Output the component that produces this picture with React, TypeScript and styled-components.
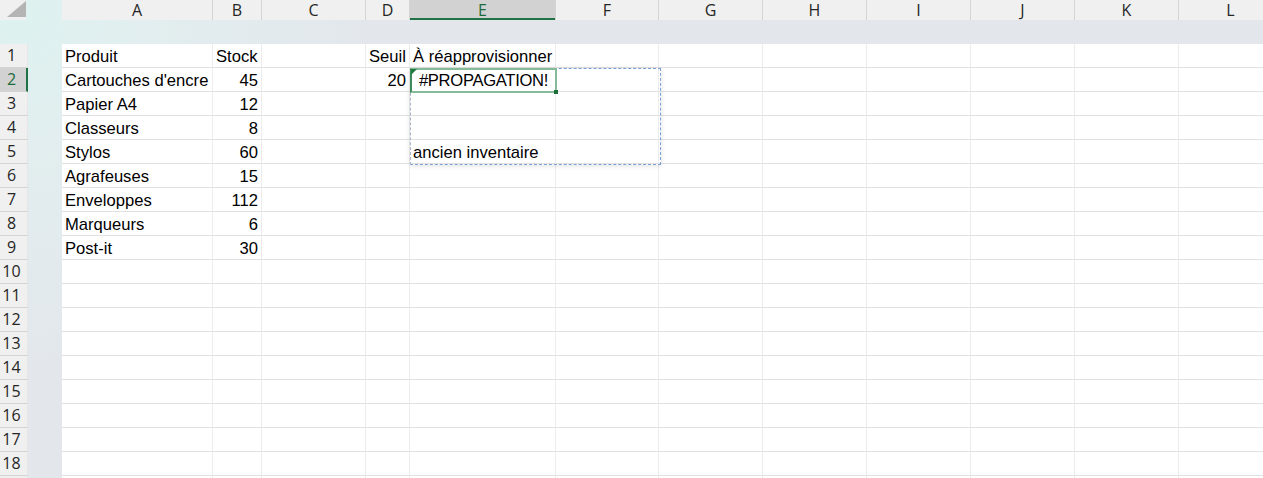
import React from "react";
import styled, { createGlobalStyle, css } from "styled-components";

const Global = createGlobalStyle`
  html, body { margin: 0; padding: 0; overflow: hidden; background: #ffffff; }
  * { box-sizing: border-box; }
`;

const COLS = [
  { key: "A", w: 151 },
  { key: "B", w: 49 },
  { key: "C", w: 104 },
  { key: "D", w: 44 },
  { key: "E", w: 146 },
  { key: "F", w: 103 },
  { key: "G", w: 104 },
  { key: "H", w: 104 },
  { key: "I", w: 104 },
  { key: "J", w: 104 },
  { key: "K", w: 104 },
  { key: "L", w: 104 },
];

const Sheet = styled.div`
  width: 1263px;
  height: 478px;
  overflow: hidden;
  display: grid;
  grid-template-columns: 28px 34px ${COLS.map((c) => c.w + "px").join(" ")};
  grid-template-rows: 20px 24px repeat(19, 24px);
  background: radial-gradient(circle at 20px 20px, #ddf2f0 0px, #e2eeef 120px, #e3e6eb 380px);
  font-family: "Liberation Sans", Arial, sans-serif;
`;

const Corner = styled.div`
  background: #f0f0f0;
  width: 26px;
  position: relative;
  svg { position: absolute; left: 0; top: 0; }
`;

const Spacer = styled.div``;

const Band = styled.div`
  grid-column: 1 / -1;
`;

const ColHeader = styled.div<{ $active?: boolean }>`
  background: ${(p) => (p.$active ? "#d2d2d2" : "#f0f0f0")};
  border-right: 1px solid #d4d4d4;
  box-shadow: ${(p) => (p.$active ? "inset 0 -2px 0 #217346" : "none")};
  color: ${(p) => (p.$active ? "#1e6b3a" : "#262626")};
  font-family: "Open Sans", "Noto Sans", sans-serif;
  font-size: 16px;
  line-height: 20px;
  height: 20px;
  text-align: center;
  white-space: nowrap;
`;

const RowHeader = styled.div<{ $active?: boolean }>`
  background: ${(p) => (p.$active ? "#d2d2d2" : "#f0f0f0")};
  border-bottom: 1px solid #d4d4d4;
  border-right: ${(p) => (p.$active ? "2px solid #217346" : "1px solid #e6e6e6")};
  color: ${(p) => (p.$active ? "#1e6b3a" : "#262626")};
  font-family: "Open Sans", "Noto Sans", sans-serif;
  font-size: 16px;
  line-height: 23px;
  text-align: center;
  padding-right: ${(p) => (p.$active ? "3px" : "4px")};
`;

type Align = "left" | "right" | "center";

const Cell = styled.div<{ $align?: Align }>`
  position: relative;
  background: #ffffff;
  border-right: 1px solid #ececec;
  border-bottom: 1px solid #e1e1e1;
  padding: 2px 3px 0 3px;
  font-size: 16.6px;
  line-height: 21px;
  color: #000000;
  white-space: nowrap;
  overflow: visible;
  text-align: ${(p) => p.$align || "left"};
  ${(p) =>
    p.$align === "center" &&
    css`
      padding-left: 2px;
      padding-right: 0;
      letter-spacing: -0.3px;
    `}
`;

const SpillBorder = styled.div`
  position: absolute;
  left: 0;
  top: 0;
  width: 251px;
  height: 97px;
  border: 1px dashed #7b9fd9;
  border-left-color: #a9b6c9;
  box-shadow: 0 1px 5px rgba(0, 0, 0, 0.12);
  pointer-events: none;
  z-index: 2;
`;

const ActiveBorder = styled.div`
  position: absolute;
  left: 0;
  top: 0;
  width: 147px;
  height: 25px;
  border: 2px solid #85bb98;
  border-left-color: #3f8a5a;
  pointer-events: none;
  z-index: 3;
`;

const FillHandle = styled.div`
  position: absolute;
  right: -3px;
  bottom: -3px;
  width: 4px;
  height: 4px;
  background: #1e6e3c;
`;

const ErrorFlag = styled.div`
  position: absolute;
  left: 1px;
  top: 1px;
  width: 0;
  height: 0;
  border-top: 6px solid #1f7a3f;
  border-right: 6px solid transparent;
  z-index: 4;
`;

type CellData = { v: string; align?: Align };

const data: Record<number, Record<string, CellData>> = {
  1: { A: { v: "Produit" }, B: { v: "Stock" }, D: { v: "Seuil" }, E: { v: "À réapprovisionner" } },
  2: { A: { v: "Cartouches d'encre" }, B: { v: "45", align: "right" }, D: { v: "20", align: "right" }, E: { v: "#PROPAGATION!", align: "center" } },
  3: { A: { v: "Papier A4" }, B: { v: "12", align: "right" } },
  4: { A: { v: "Classeurs" }, B: { v: "8", align: "right" } },
  5: { A: { v: "Stylos" }, B: { v: "60", align: "right" }, E: { v: "ancien inventaire" } },
  6: { A: { v: "Agrafeuses" }, B: { v: "15", align: "right" } },
  7: { A: { v: "Enveloppes" }, B: { v: "112", align: "right" } },
  8: { A: { v: "Marqueurs" }, B: { v: "6", align: "right" } },
  9: { A: { v: "Post-it" }, B: { v: "30", align: "right" } },
};

const VISIBLE_ROWS = 18;

export default function App() {
  const rows = Array.from({ length: VISIBLE_ROWS + 1 }, (_, i) => i + 1);
  return (
    <>
      <Global />
      <Sheet>
        <Corner>
          <svg width="26" height="20" viewBox="0 0 26 20">
            <polygon points="7,17 26,17 26,1" fill="#b4b4b4" />
          </svg>
        </Corner>
        <Spacer />
        {COLS.map((c) => (
          <ColHeader key={c.key} $active={c.key === "E"}>
            {c.key}
          </ColHeader>
        ))}
        <Band />
        {rows.map((r) => (
          <React.Fragment key={r}>
            <RowHeader $active={r === 2}>{r <= VISIBLE_ROWS ? r : ""}</RowHeader>
            <Spacer />
            {COLS.map((c) => {
              const d = data[r]?.[c.key];
              const isActive = r === 2 && c.key === "E";
              return (
                <Cell key={c.key} $align={d?.align}>
                  {isActive && (
                    <>
                      <SpillBorder />
                      <ActiveBorder>
                        <FillHandle />
                      </ActiveBorder>
                      <ErrorFlag />
                    </>
                  )}
                  {d?.v}
                </Cell>
              );
            })}
          </React.Fragment>
        ))}
      </Sheet>
    </>
  );
}
